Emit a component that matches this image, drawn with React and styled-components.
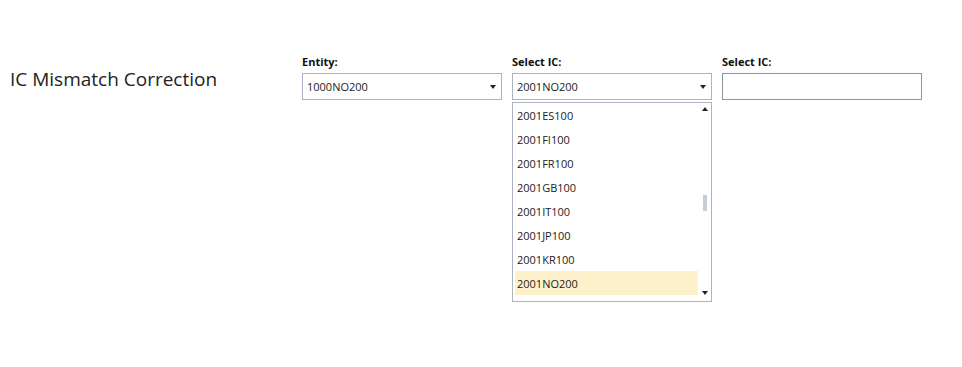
import React from "react";
import styled, { createGlobalStyle } from "styled-components";

const GlobalStyle = createGlobalStyle`
  body {
    margin: 0;
    background: #fff;
    font-family: "Open Sans", "Noto Sans", sans-serif;
    color: #1e1e1e;
  }
`;

const Page = styled.div`
  display: flex;
  align-items: flex-start;
  padding: 55px 0 0 10px;
`;

const Title = styled.h1`
  width: 292px;
  margin: 12px 0 0;
  font-size: 19px;
  font-weight: 400;
  line-height: 24px;
  color: #222;
`;

const Fields = styled.div`
  display: flex;
  align-items: flex-start;
  gap: 10px;
`;

const Field = styled.div`
  width: 200px;
  display: flex;
  flex-direction: column;
`;

const Label = styled.label`
  font-size: 11px;
  font-weight: 700;
  line-height: 14px;
  margin-bottom: 4px;
  color: #111;
`;

const SelectBox = styled.div`
  box-sizing: border-box;
  height: 27px;
  border: 1px solid ${(p) => (p.$plain ? "#8e959d" : "#abb3c0")};
  display: flex;
  align-items: center;
  justify-content: space-between;
  padding: 0 5px 0 4px;
  font-size: 11px;
  color: #222;
`;

const Caret = styled.span`
  width: 0;
  height: 0;
  border-left: 3px solid transparent;
  border-right: 3px solid transparent;
  ${(p) =>
    p.$up ? "border-bottom: 4px solid #222;" : "border-top: 4px solid #222;"}
`;

const List = styled.div`
  box-sizing: border-box;
  margin-top: 2px;
  width: 200px;
  height: 200px;
  border: 1px solid #abb3c0;
  background: #fff;
  display: flex;
`;

const Options = styled.ul`
  flex: 1;
  list-style: none;
  margin: 0;
  padding: 0 0 0 2px;
`;

const Option = styled.li`
  height: 24px;
  line-height: 25px;
  padding-left: 2px;
  font-size: 11px;
  color: #222;
  background: ${(p) => (p.$selected ? "#fdf1cc" : "transparent")};
`;

const Scrollbar = styled.div`
  width: 13px;
  display: flex;
  flex-direction: column;
  align-items: center;
  padding: 4px 0 6px;
`;

const Track = styled.div`
  flex: 1;
  display: flex;
  flex-direction: column;
  align-items: center;
`;

const Thumb = styled.div`
  width: 4px;
  height: 16px;
  margin-top: ${(p) => p.$offset}px;
  background: #c6ccd8;
`;

const items = [
  "2001ES100",
  "2001FI100",
  "2001FR100",
  "2001GB100",
  "2001IT100",
  "2001JP100",
  "2001KR100",
  "2001NO200",
];

export default function App() {
  return (
    <>
      <GlobalStyle />
      <Page>
        <Title>IC Mismatch Correction</Title>
        <Fields>
          <Field>
            <Label>Entity:</Label>
            <SelectBox>
              1000NO200
              <Caret />
            </SelectBox>
          </Field>
          <Field>
            <Label>Select IC:</Label>
            <SelectBox>
              2001NO200
              <Caret />
            </SelectBox>
            <List>
              <Options>
                {items.map((it) => (
                  <Option key={it} $selected={it === "2001NO200"}>
                    {it}
                  </Option>
                ))}
              </Options>
              <Scrollbar>
                <Caret $up />
                <Track>
                  <Thumb $offset={84} />
                </Track>
                <Caret />
              </Scrollbar>
            </List>
          </Field>
          <Field>
            <Label>Select IC:</Label>
            <SelectBox $plain />
          </Field>
        </Fields>
      </Page>
    </>
  );
}
